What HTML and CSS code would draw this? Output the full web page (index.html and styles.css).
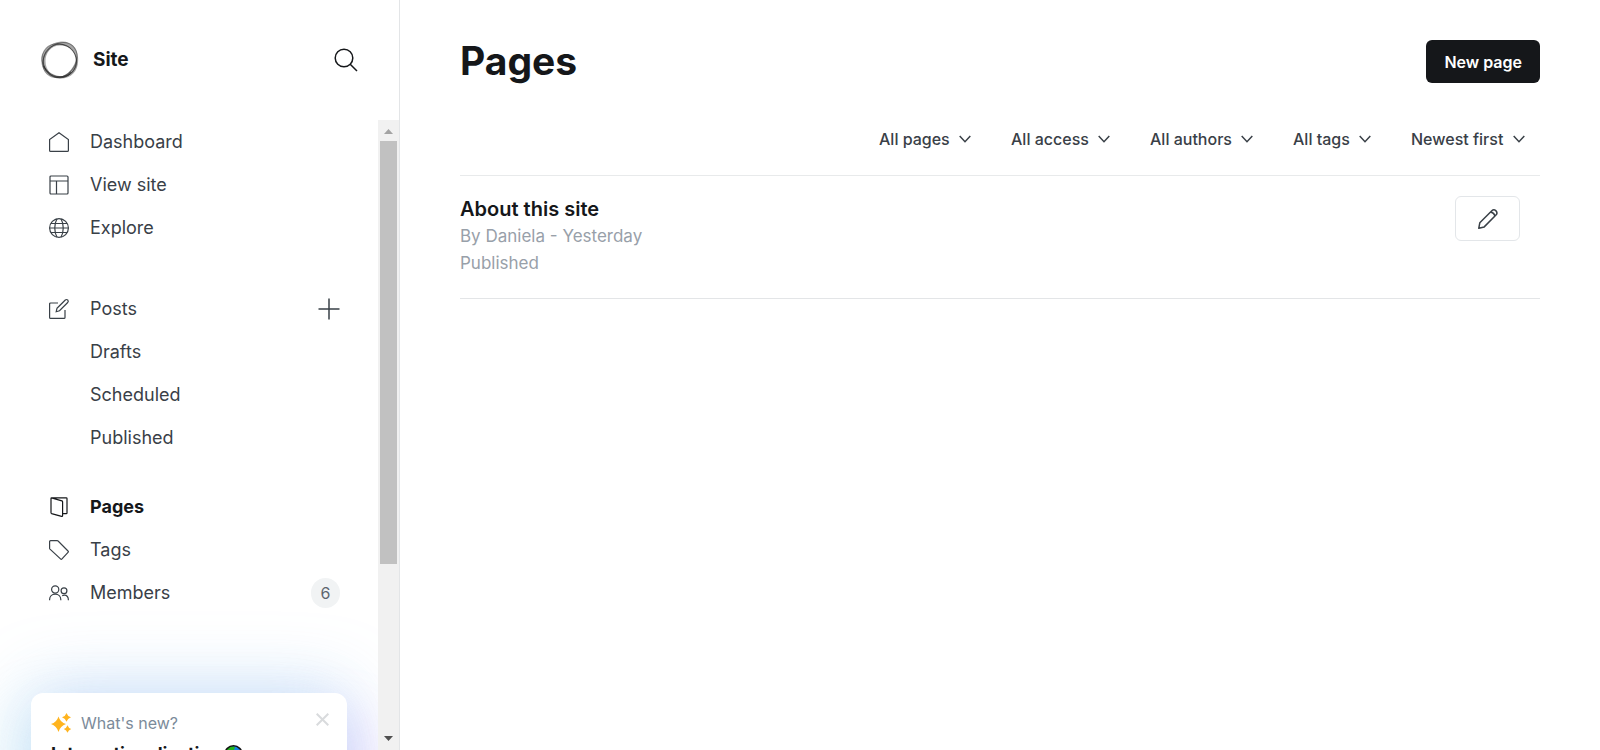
FILE: index.html
```html
<!DOCTYPE html>
<html lang="en">
<head>
<meta charset="utf-8">
<title>Pages - Site</title>
<link rel="stylesheet" href="styles.css">
</head>
<body>
<div class="app">
  <aside class="sidebar">
    <header class="site-header">
      <svg class="site-logo" viewBox="0 0 38 38" fill="#222" fill-rule="evenodd" stroke="#222" aria-hidden="true">
        <path opacity=".4" stroke="none" d="M20 .5C29 -.5 36 6 37 16 38.500 29 31 37.500 19.500 37.500 8 37.500 .3 29.500 .3 19.500 .3 10 8 2 20 .5zM19 4.500C10 4.500 4.500 12 4.500 20c0 9 6 15.500 14.500 15.500 5 0 13-6 16-17C35.500 10.500 29 4.500 19 4.500z"/>
        <ellipse cx="18.800" cy="20" rx="16.500" ry="16.800" fill="none" stroke-width="1" opacity=".6"/>
        <ellipse cx="19" cy="19" rx="19" ry="15.500" fill="none" stroke-width="1" opacity=".45" transform="rotate(-48 19 19)"/>
        <ellipse cx="18.500" cy="19.500" rx="17.800" ry="16" fill="none" stroke-width="1" opacity=".45" transform="rotate(30 19 19)"/>
        <path d="M2.500 25C6 33 12 36 19 36c5 0 9-2.500 11-5" fill="none" stroke-width="1.500" opacity=".6"/>
      </svg>
      <span class="site-name">Site</span>
      <button class="icon-button" type="button" aria-label="Search">
        <svg width="24" height="24" viewBox="0 0 24 24" fill="none" stroke="#15171a" stroke-width="1.500"><circle cx="10" cy="10" r="8.800"/><path d="M16.200 16.200L23 23"/></svg>
      </button>
    </header>
    <div class="scroll-area">
      <div class="scroll-content">
        <nav>
          <ul class="menu">
            <li class="menu-item"><a href="#dashboard"><svg class="menu-icon" viewBox="0 0 20 20"><path d="M.6 7.600v10.800q0 1 1 1h16.800q1 0 1-1V7.600L10 .7z"/></svg>Dashboard</a></li>
            <li class="menu-item"><a href="#view"><svg class="menu-icon" viewBox="0 0 20 20"><rect x="1" y="1" width="18" height="18" rx="1"/><path d="M1 6h18M7.500 6v13"/></svg>View site</a></li>
            <li class="menu-item"><a href="#explore"><svg class="menu-icon" viewBox="0 0 20 20"><circle cx="10" cy="10" r="9.400"/><path d="M.6 10h18.800M2 5.500h16M2 14.500h16M8 .8c-3 5.500-3 12.900 0 18.400M12 .8c3 5.500 3 12.900 0 18.400"/></svg>Explore</a></li>
          </ul>
          <ul class="menu menu-posts">
            <li class="menu-item"><a href="#posts"><svg class="menu-icon" viewBox="0 0 20 20"><path d="M9 4H1.600q-1 0-1 1v13.400q0 1 1 1H15q1 0 1-1V11"/><path d="M8 9.200L16.300 1q1.200-1 2.400 0 1.200 1.300 0 2.500L10.500 11.700 7.200 12.700z"/></svg>Posts</a>
              <button class="icon-button" type="button" aria-label="New post"><svg width="22" height="22" viewBox="0 0 22 22" fill="none" stroke="#394047" stroke-width="1.500"><path d="M11 .5v21M.5 11h21"/></svg></button></li>
            <li class="menu-item menu-sub"><a href="#drafts">Drafts</a></li>
            <li class="menu-item menu-sub"><a href="#scheduled">Scheduled</a></li>
            <li class="menu-item menu-sub"><a href="#published">Published</a></li>
          </ul>
          <ul class="menu menu-manage">
            <li class="menu-item"><a class="active" href="#pages" aria-current="page"><svg class="menu-icon" viewBox="0 0 20 20"><path d="M2.500.8h14.700q.8 0 .8.800v14.300q0 .8-.8.800h-3.400M2.500.8q-.5 0-.5.800v14.200q0 .6.600.8l10 2.700q1 .2 1-.7V4.700q0-.7-.7-.9z"/></svg>Pages</a></li>
            <li class="menu-item"><a href="#tags"><svg class="menu-icon" viewBox="0 0 20 20"><path d="M1.600.7h6.600q.5 0 .9.300l9.900 10q.8.700 0 1.400l-6 6.500q-.7.800-1.500 0L1 9.100q-.4-.4-.4-.9V1.700q0-1 1-1z"/></svg>Tags</a></li>
            <li class="menu-item"><a href="#members"><svg class="menu-icon" viewBox="0 0 20 20"><circle cx="6.200" cy="6.500" r="3.600"/><circle cx="15" cy="7.800" r="2.900"/><path d="M.6 17.300v-.8c0-3.200 2.400-5.300 5.600-5.300s5.600 2.100 5.600 5.300v.8M13.200 12.600q1-.5 2.100-.5c2.600 0 4.100 2.200 4.100 5.200"/></svg>Members</a><span class="count">6</span></li>
          </ul>
        </nav>
        <section class="news">
          <div class="news-head">
            <svg width="21" height="20" viewBox="0 0 21 20" fill="#ffb41f" aria-hidden="true"><path d="M7.500 3.500q1.800 6 7.500 7.500-5.700 1.800-7.500 8Q5.700 12.800 0 11q5.700-1.500 7.500-7.500zM15.500 0q1 3.300 4.500 4.300-3.500 1.200-4.500 4.500-1-3.300-4.500-4.500Q14.500 3.300 15.500 0zM16.500 12.300q.9 2.800 3.700 3.700-2.800 1-3.700 3.800-.9-2.800-3.700-3.800 2.800-.9 3.700-3.700z"/></svg>
            <span class="news-label">What's new?</span>
            <button class="icon-button news-close" type="button" aria-label="Dismiss"><svg width="13" height="13" viewBox="0 0 13 13" stroke="#d9dbdd" stroke-width="2"><path d="M.7.7l11.600 11.600M12.300.7L.7 12.300"/></svg></button>
          </div>
          <div class="news-title">Internationalisation
            <svg width="19" height="19" viewBox="0 0 19 19" aria-hidden="true"><circle cx="9.500" cy="9.500" r="8.500" fill="#1683e0"/><path d="M3 4q4-4 8-2l-1 3 2 2-1 4-3 5-3-3-3-4zM14 8l3 1-1 4-2 1z" fill="#23b51c"/><circle cx="9.500" cy="9.500" r="8.700" fill="none" stroke="#111" stroke-width="1.500"/></svg>
          </div>
        </section>
      </div>
      <div class="scrollbar" aria-hidden="true">
        <svg class="arrow" viewBox="0 0 21 21"><path d="M6 14h9L10.500 9z" fill="#a3a3a3"/></svg>
        <div class="track"><div class="thumb"></div></div>
        <svg class="arrow" viewBox="0 0 21 21"><path d="M6 7h9l-4.500 5z" fill="#505050"/></svg>
      </div>
    </div>
  </aside>
  <main class="main">
    <header class="page-header">
      <h1>Pages</h1>
      <button class="primary" type="button">New page</button>
    </header>
    <div class="filters">
      <div class="filter"><select aria-label="Type"><option>All pages</option></select><svg class="chevron" viewBox="0 0 12 8"><path d="M.7.900L6 6.700 11.300.9"/></svg></div>
      <div class="filter"><select aria-label="Access"><option>All access</option></select><svg class="chevron" viewBox="0 0 12 8"><path d="M.7.900L6 6.700 11.300.9"/></svg></div>
      <div class="filter"><select aria-label="Author"><option>All authors</option></select><svg class="chevron" viewBox="0 0 12 8"><path d="M.7.900L6 6.700 11.300.9"/></svg></div>
      <div class="filter"><select aria-label="Tag"><option>All tags</option></select><svg class="chevron" viewBox="0 0 12 8"><path d="M.7.900L6 6.700 11.300.9"/></svg></div>
      <div class="filter"><select aria-label="Sort"><option>Newest first</option></select><svg class="chevron" viewBox="0 0 12 8"><path d="M.7.900L6 6.700 11.300.9"/></svg></div>
    </div>
    <ul class="page-list">
      <li class="page-row">
        <div class="page-info">
          <h2>About this site</h2>
          <p>By Daniela - Yesterday</p>
          <p>Published</p>
        </div>
        <button class="edit" type="button" aria-label="Edit page"><svg width="20" height="20" viewBox="0 0 20 20" fill="none" stroke="#394047" stroke-width="1.500" stroke-linejoin="round"><path d="M.8 19.200l1-5.400L13.800 1.800q1.900-1.800 4-.2 2.100 2.100.4 4.200L6.200 17.900zM12.700 3q3.300.7 4.300 4"/></svg></button>
      </li>
    </ul>
  </main>
</div>
</body>
</html>
```
FILE: styles.css
```css
* { box-sizing: border-box; }
body { margin: 0; font-family: Inter, "Liberation Sans", sans-serif; color: #15171a; background: #fff; }
h1, h2, p, ul { margin: 0; padding: 0; }
ul { list-style: none; }
button, select { font: inherit; }
svg { flex: none; display: block; }
a { color: inherit; text-decoration: none; }

.app { display: flex; height: 100vh; overflow: hidden; }
.sidebar { flex: none; width: 400px; display: flex; flex-direction: column; border-right: 1px solid #e3e5e7; }
.site-header { flex: none; height: 120px; padding: 0 41px; display: flex; align-items: center; gap: 14px; }
.site-logo { width: 38px; height: 38px; }
.site-name { flex: 1; font-size: 19px; line-height: 24px; font-weight: 700; }
.icon-button { display: flex; padding: 0; border: 0; background: none; cursor: pointer; }

.scroll-area { flex: 1; min-height: 0; display: flex; }
.scroll-content { flex: 1; min-width: 0; overflow: hidden; }
.menu-posts { margin-top: 38px; }
.menu-manage { margin-top: 26px; }
.menu-item { display: flex; align-items: center; justify-content: space-between; height: 43px; padding: 0 38px 0 49px; }
.menu-item a { display: flex; align-items: center; gap: 21px; font-size: 18px; line-height: 24px; color: #394047; }
.menu-sub a { padding-left: 41px; }
.menu-item .active { color: #15171a; font-weight: 700; }
.menu-icon { width: 20px; height: 20px; fill: none; stroke: currentColor; stroke-width: 1.2; overflow: visible; }
.count { min-width: 29px; padding: 0 9px; border-radius: 15px; background: #f1f3f4; color: #5d666f; font-size: 16px; line-height: 30px; text-align: center; }

.news { margin: 79px 31px 0; height: 160px; padding: 19px 20px; border-radius: 12px; background: #fff;
  box-shadow: -15px 15px 60px rgba(170, 240, 240, .3), 0 -4px 70px rgba(130, 175, 240, .38), 20px 25px 50px rgba(215, 150, 255, .28); }
.news-head { display: flex; align-items: center; gap: 9px; }
.news-label { flex: 1; font-size: 16px; line-height: 22px; color: #7c8b9a; }
.news-close { margin: 0 -2px 8px 0; }
.news-title { display: flex; align-items: center; gap: 2px; margin-top: 9px; font-size: 18px; line-height: 22px; font-weight: 700; }

.scrollbar { flex: none; width: 21px; display: flex; flex-direction: column; background: #f1f1f1; }
.arrow { width: 21px; height: 21px; }
.track { flex: 1; padding: 0 2px; }
.thumb { height: 72%; background: #c1c1c1; }

.main { flex: 1; min-width: 0; padding: 40px 60px 0; }
.page-header { display: flex; align-items: flex-start; justify-content: space-between; height: 43px; }
h1 { font-size: 39px; line-height: 42px; font-weight: 700; }
.primary { height: 43px; padding: 0 18px; border: 0; border-radius: 6px; background: #15171a; color: #fff; font-size: 16px; font-weight: 600; }
.filters { display: flex; justify-content: flex-end; gap: 40px; height: 92px; padding: 18px 15px 0 0; }
.filter { display: flex; align-items: center; gap: 9px; height: 76px; }
.filter select { appearance: none; border: 0; padding: 0; background: none; color: #394047; font-size: 16px; line-height: 24px; font-weight: 500; }
.chevron { width: 12px; height: 8px; fill: none; stroke: #394047; stroke-width: 1.5; }
.page-list { border-top: 1px solid #e8eaeb; }
.page-row { display: flex; justify-content: space-between; align-items: flex-start; padding: 20px 20px 21px 0; border-bottom: 1px solid #e3e5e7; }
.page-info { font-size: 17px; line-height: 27px; color: #98a0a9; }
h2 { font-size: 20px; line-height: 27px; font-weight: 600; color: #15171a; }
.edit { display: flex; align-items: center; justify-content: center; width: 65px; height: 45px; border: 1px solid #e3e6e9; border-radius: 6px; background: #fff; }
```
